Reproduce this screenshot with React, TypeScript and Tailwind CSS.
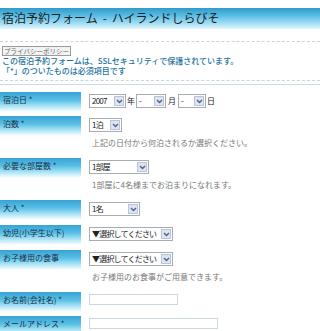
const JP = "font-['Noto_Sans_CJK_JP','Noto_Sans',sans-serif]";

function Chevron() {
  return (
    <svg width="7" height="5" viewBox="0 0 7 5">
      <path d="M1 1 L3.5 3.5 L6 1" fill="none" stroke="#4d6185" strokeWidth="1.4" />
    </svg>
  );
}

function FakeSelect({ value, w }: { value: string; w: string }) {
  return (
    <div className={`flex h-[14px] items-stretch border border-[#a5acb2] bg-white ${w}`}>
      <span className="flex-1 overflow-hidden whitespace-nowrap pl-[2px] text-[8px] leading-[12px] tracking-[-0.8px] text-[#222]">
        {value}
      </span>
      <span className="m-px flex w-[10px] items-center justify-center border border-[#b9c3d9] bg-[#dfe4f1]">
        <Chevron />
      </span>
    </div>
  );
}

function FakeInput({ w }: { w: string }) {
  return <div className={`h-[11px] border border-[#c9d8df] bg-white ${w}`} />;
}

type Row = {
  label: string;
  height: string;
  children: React.ReactNode;
  hint?: string;
};

function FormRow({ label, height, children, hint }: Row) {
  return (
    <div className={`flex ${height}`}>
      <div className="h-[20px] w-[81px] shrink-0 bg-[linear-gradient(to_bottom,#39a2d2_0%,#58c0e6_40%,#a9e3f6_70%,#ffffff_100%)] pl-[3px] pt-[3px] text-[8px] leading-[10px] text-[#1d2f45]">
        {label}
      </div>
      <div className="ml-[8px] pt-[2px]">
        <div className="flex items-center">{children}</div>
        {hint && (
          <p className="mt-[6px] pl-[3px] text-[8px] leading-[10px] text-[#777]">{hint}</p>
        )}
      </div>
    </div>
  );
}

export default function App() {
  return (
    <div className={`h-[331px] w-[320px] overflow-hidden bg-white pt-[8px] ${JP}`}>
      <div className="flex h-[21px] items-start bg-[linear-gradient(to_bottom,#2f9bc9_0%,#57bbe3_35%,#a6e0f4_75%,#e4f7fd_100%)] pl-[2px] pt-[3px] text-[12px] leading-[14px] text-[#1c1c1c]">
        <span>宿泊予約フォーム</span>
        <span className="mx-[5px]">-</span>
        <span>ハイランドしらびそ</span>
      </div>

      <div className="mt-[12px] border-t border-dashed border-[#c9d5db]" />

      <div className="px-[2px] pt-[4px]">
        <div className="flex h-[10px] w-[69px] items-center justify-center overflow-hidden whitespace-nowrap border border-[#9a9a9a] bg-[#f3f3f3] text-[6.5px] leading-[8px] text-[#666]">
          プライバシーポリシー
        </div>
        <p className="text-[8px] font-medium leading-[10px] text-[#2272a0]">
          この宿泊予約フォームは、SSLセキュリティで保護されています。
        </p>
        <p className="text-[8px] font-medium leading-[10px] text-[#2272a0]">
          「*」のついたものは必須項目です
        </p>
      </div>

      <div className="mt-[4px] border-t border-dashed border-[#c9d5db]" />
      <div className="mt-[3px] border-t border-[#cddde4]" />

      <div className="pt-[7px]">
        <FormRow label="宿泊日 *" height="h-[24px]">
          <FakeSelect value="2007" w="w-[37px]" />
          <span className="mx-[1px] text-[8px] text-[#222]">年</span>
          <FakeSelect value="-" w="w-[30px]" />
          <span className="mx-[2px] text-[8px] text-[#222]">月</span>
          <FakeSelect value="-" w="w-[28px]" />
          <span className="ml-[1px] text-[8px] text-[#222]">日</span>
        </FormRow>
        <FormRow label="泊数 *" height="h-[42px]" hint="上記の日付から何泊されるか選択ください。">
          <FakeSelect value="1泊" w="w-[33px]" />
        </FormRow>
        <FormRow label="必要な部屋数 *" height="h-[42px]" hint="1部屋に4名様までお泊まりになれます。">
          <FakeSelect value="1部屋" w="w-[60px]" />
        </FormRow>
        <FormRow label="大人 *" height="h-[25px]">
          <FakeSelect value="1名" w="w-[51px]" />
        </FormRow>
        <FormRow label="幼児(小学生以下)" height="h-[25px]">
          <FakeSelect value="▼選択してください" w="w-[84px]" />
        </FormRow>
        <FormRow label="お子様用の食事" height="h-[42px]" hint="お子様用のお食事がご用意できます。">
          <FakeSelect value="▼選択してください" w="w-[84px]" />
        </FormRow>
        <FormRow label="お名前(会社名) *" height="h-[24px]">
          <FakeInput w="w-[89px]" />
        </FormRow>
        <FormRow label="メールアドレス *" height="h-[24px]">
          <FakeInput w="w-[129px]" />
        </FormRow>
      </div>
    </div>
  );
}
